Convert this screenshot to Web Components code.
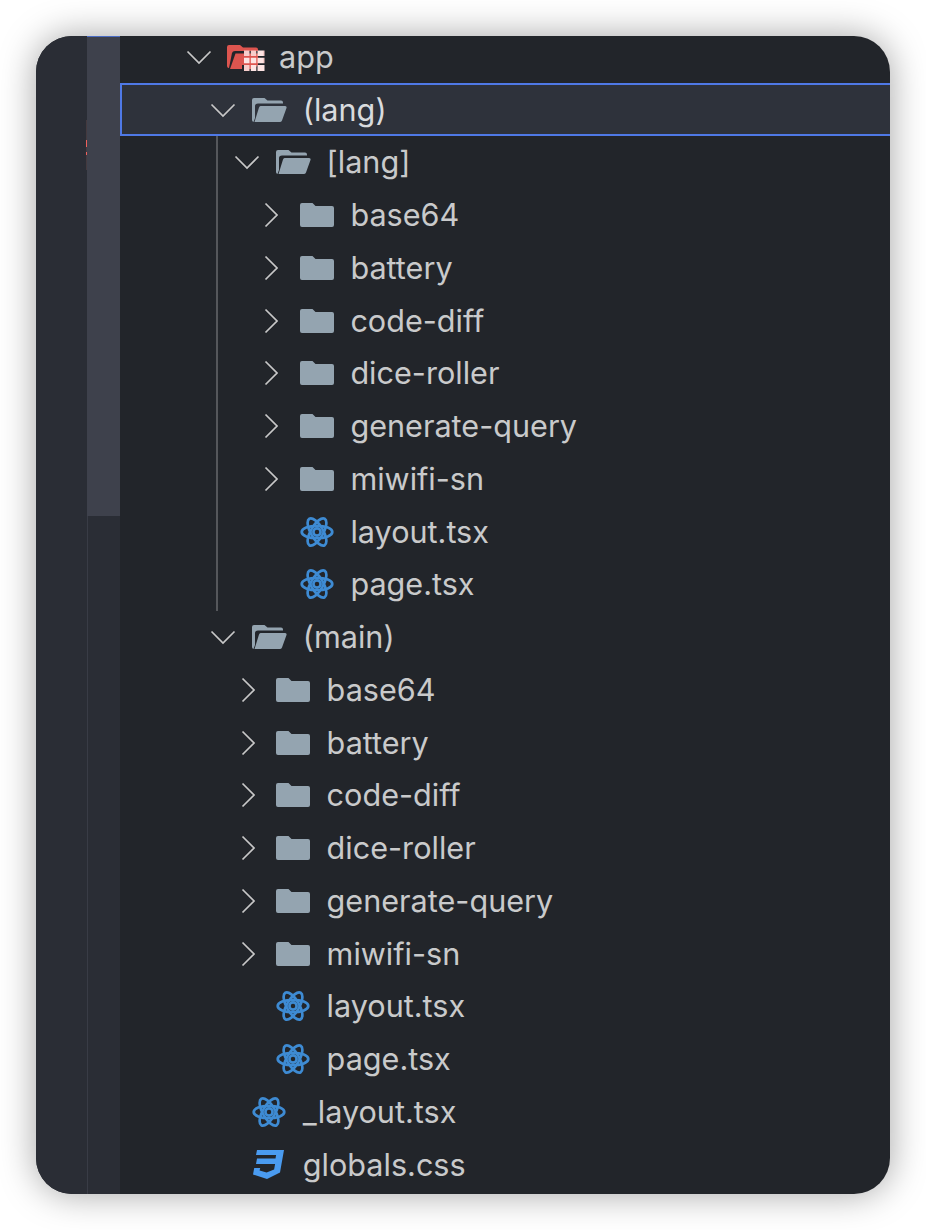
<!DOCTYPE html>
<html lang="en">
<head>
<meta charset="utf-8">
<title>File tree</title>
<style>
	html, body {
		margin: 0;
		background: #fff;
	}

	body {
		padding: 36px;
		height: 1230px;
		box-sizing: border-box;
		font-family: Inter, "Liberation Sans", sans-serif;
	}
</style>
</head>
<body>
<editor-window>
	<tree-row level="0" kind="app" open>app</tree-row>
	<tree-row level="1" kind="folder-open" open selected>(lang)</tree-row>
	<tree-group level="1">
		<tree-row level="2" kind="folder-open" open>[lang]</tree-row>
		<tree-row level="3" kind="folder">base64</tree-row>
		<tree-row level="3" kind="folder">battery</tree-row>
		<tree-row level="3" kind="folder">code-diff</tree-row>
		<tree-row level="3" kind="folder">dice-roller</tree-row>
		<tree-row level="3" kind="folder">generate-query</tree-row>
		<tree-row level="3" kind="folder">miwifi-sn</tree-row>
		<tree-row level="3" kind="react">layout.tsx</tree-row>
		<tree-row level="3" kind="react">page.tsx</tree-row>
	</tree-group>
	<tree-row level="1" kind="folder-open" open>(main)</tree-row>
	<tree-row level="2" kind="folder">base64</tree-row>
	<tree-row level="2" kind="folder">battery</tree-row>
	<tree-row level="2" kind="folder">code-diff</tree-row>
	<tree-row level="2" kind="folder">dice-roller</tree-row>
	<tree-row level="2" kind="folder">generate-query</tree-row>
	<tree-row level="2" kind="folder">miwifi-sn</tree-row>
	<tree-row level="2" kind="react">layout.tsx</tree-row>
	<tree-row level="2" kind="react">page.tsx</tree-row>
	<tree-row level="1" kind="react">_layout.tsx</tree-row>
	<tree-row level="1" kind="css">globals.css</tree-row>
</editor-window>

<script>
const ICONS = {
	folder: `<svg width="34" height="24" viewBox="0 0 34 24"><path fill="#94a4b0" d="M2 0h10.500l3 3H32a2 2 0 0 1 2 2v17a2 2 0 0 1-2 2H2a2 2 0 0 1-2-2V2a2 2 0 0 1 2-2z"/></svg>`,
	"folder-open": `<svg width="35" height="24" viewBox="0 0 35 24"><path fill="#94a4b0" d="M2 0h10.500l3 2.500H29a2 2 0 0 1 2 2v1H6Q3 5.500 3 8v12L1.500 24Q0 23.500 0 22V2a2 2 0 0 1 2-2z"/><path fill="#94a4b0" d="M8.500 8H33a1.500 1.500 0 0 1 1.500 2L30 22.500a2 2 0 0 1-2 1.500H2.500L7 9.500Q7.500 8 8.500 8z"/></svg>`,
	app: `<svg width="38" height="27" viewBox="0 0 38 27"><path fill="#dd554f" d="M2 0h11l3 2.500h13a2 2 0 0 1 2 2V6H8Q5.500 6 5 8L2 23H1.500Q0 22.500 0 21V2a2 2 0 0 1 2-2z"/><path fill="#dd554f" d="M8.500 8.500H31V20l-4 4H3z"/><path fill="#22252a" d="M15 20h2v7h-2zM31 5h7v22H15v-1h16z"/><g fill="#f8cdcb"><path d="M17 5.500h5.500V11H17zM23.800 5.500h5.500V11h-5.500zM17 20h5.500v6H17zM36 5.500h1.500V11H36zM36 12.700h1.500v5.600H36z"/></g><g fill="#fde4e3"><path d="M30.500 5.500H36V11h-5.500zM23.800 12.700h5.500v5.600h-5.500zM30.500 12.700H36v5.600h-5.500zM17 12.700h5.500v5.600H17zM23.800 20h5.500v6h-5.500zM30.500 20H36v6h-5.500zM36 20h1.500v6H36z"/></g></svg>`,
	react: `<svg width="34" height="30" viewBox="0 0 34 30"><g fill="none" stroke="#3e8bd3" stroke-width="2.700"><ellipse cx="17" cy="15" rx="15.300" ry="6.200"/><ellipse cx="17" cy="15" rx="15.300" ry="6.200" transform="rotate(60 17 15)"/><ellipse cx="17" cy="15" rx="15.300" ry="6.200" transform="rotate(120 17 15)"/><circle cx="17" cy="15" r="3.600"/></g></svg>`,
	css: `<svg width="32" height="29" viewBox="0 0 32 29"><path fill="#4a9bf0" fill-rule="evenodd" d="M4 0h27l-4 22.500L14 29 0 24.500 1.200 18h6l-.6 2.500 7 2 7.500-3 1-5.500H3l1-5.500h18.500l.6-3.500H3z"/></svg>`
};

class EditorWindow extends HTMLElement {
	constructor() {
		super();
		this.attachShadow({ mode: "open" });
	}

	connectedCallback() {
		this.shadowRoot.innerHTML = `
			<style>
				:host {
					display: grid;
					grid-template-columns: 51px 33px 1fr;
					width: 854px;
					height: 1158px;
					border-radius: 36px;
					overflow: hidden;
					background: #22252a;
					box-shadow: 0 0 36px rgba(0, 0, 0, 0.36);
				}

				.activity {
					position: relative;
					background: #2a2d35;
				}

				.ruler {
					position: absolute;
					top: 84px;
					right: 0;
					width: 1px;
					height: 50px;
					background: #443a3f;
				}

				.mark {
					position: absolute;
					right: 0;
					width: 1px;
					background: #f0605c;
				}

				.scroll {
					background: #2a2d35;
					border-left: 1px solid #393c46;
				}

				.thumb {
					height: 479px;
					margin-left: -1px;
					border-top: 1px solid #4a6cc4;
					background: #3e414c;
				}

				.tree {
					margin-top: -5.4px;
					min-width: 0;
				}
			</style>
			<div class="activity">
				<div class="ruler"></div>
				<div class="mark" style="top: 104px; height: 7px"></div>
				<div class="mark" style="top: 116px; height: 3px"></div>
			</div>
			<div class="scroll"><div class="thumb"></div></div>
			<div class="tree"><slot></slot></div>
		`;
	}
}

class TreeGroup extends HTMLElement {
	constructor() {
		super();
		this.attachShadow({ mode: "open" });
	}

	connectedCallback() {
		const level = Number(this.getAttribute("level") ?? 0);
		this.shadowRoot.innerHTML = `
			<style>
				:host {
					display: block;
					position: relative;
				}

				.guide {
					position: absolute;
					top: 0;
					bottom: 0;
					left: ${96 + (level - 1) * 24}px;
					width: 2px;
					background: #55575b;
				}
			</style>
			<slot></slot>
			<div class="guide"></div>
		`;
	}
}

class TreeRow extends HTMLElement {
	constructor() {
		super();
		this.attachShadow({ mode: "open" });
	}

	connectedCallback() {
		const level = Number(this.getAttribute("level") ?? 0);
		const kind = this.getAttribute("kind") ?? "folder";
		const isFolder = kind !== "react" && kind !== "css";
		const chevron = this.hasAttribute("open")
			? `<svg width="26" height="16" viewBox="0 0 26 16"><path fill="none" stroke="#c8c8c8" stroke-width="1.700" d="M1.500 2.500L13 14 24.500 2.500"/></svg>`
			: `<svg class="closed" width="14" height="26" viewBox="0 0 14 26"><path fill="none" stroke="#c8c8c8" stroke-width="1.700" d="M1.500 1.500L13 13 1.500 24.500"/></svg>`;

		this.shadowRoot.innerHTML = `
			<style>
				:host {
					display: flex;
					align-items: center;
					box-sizing: border-box;
					height: 52.760px;
					padding-left: ${66 + level * 23.8}px;
					color: #c9cacb;
					font-size: 30.600px;
				}

				:host([selected]) {
					background: #2e323b;
					color: #d9dbde;
					box-shadow: inset 2px 2px 0 #4f79e6, inset 0 -2px 0 #4f79e6;
				}

				:host([kind="app"]) .icon svg {
					margin-top: 3px;
				}

				.twistie {
					flex: none;
					display: flex;
					justify-content: center;
					align-items: center;
					width: 26px;
				}

				.closed {
					margin-left: 2px;
				}

				.icon {
					flex: none;
					display: flex;
					justify-content: center;
					width: 40px;
					margin: 0 13.500px 0 13.500px;
				}

				.label {
					padding-bottom: 1px;
				}

				svg {
					display: block;
				}
			</style>
			<span class="twistie">${isFolder ? chevron : ""}</span>
			<span class="icon">${ICONS[kind]}</span>
			<span class="label"><slot></slot></span>
		`;
	}
}

customElements.define("editor-window", EditorWindow);
customElements.define("tree-group", TreeGroup);
customElements.define("tree-row", TreeRow);
</script>
</body>
</html>
